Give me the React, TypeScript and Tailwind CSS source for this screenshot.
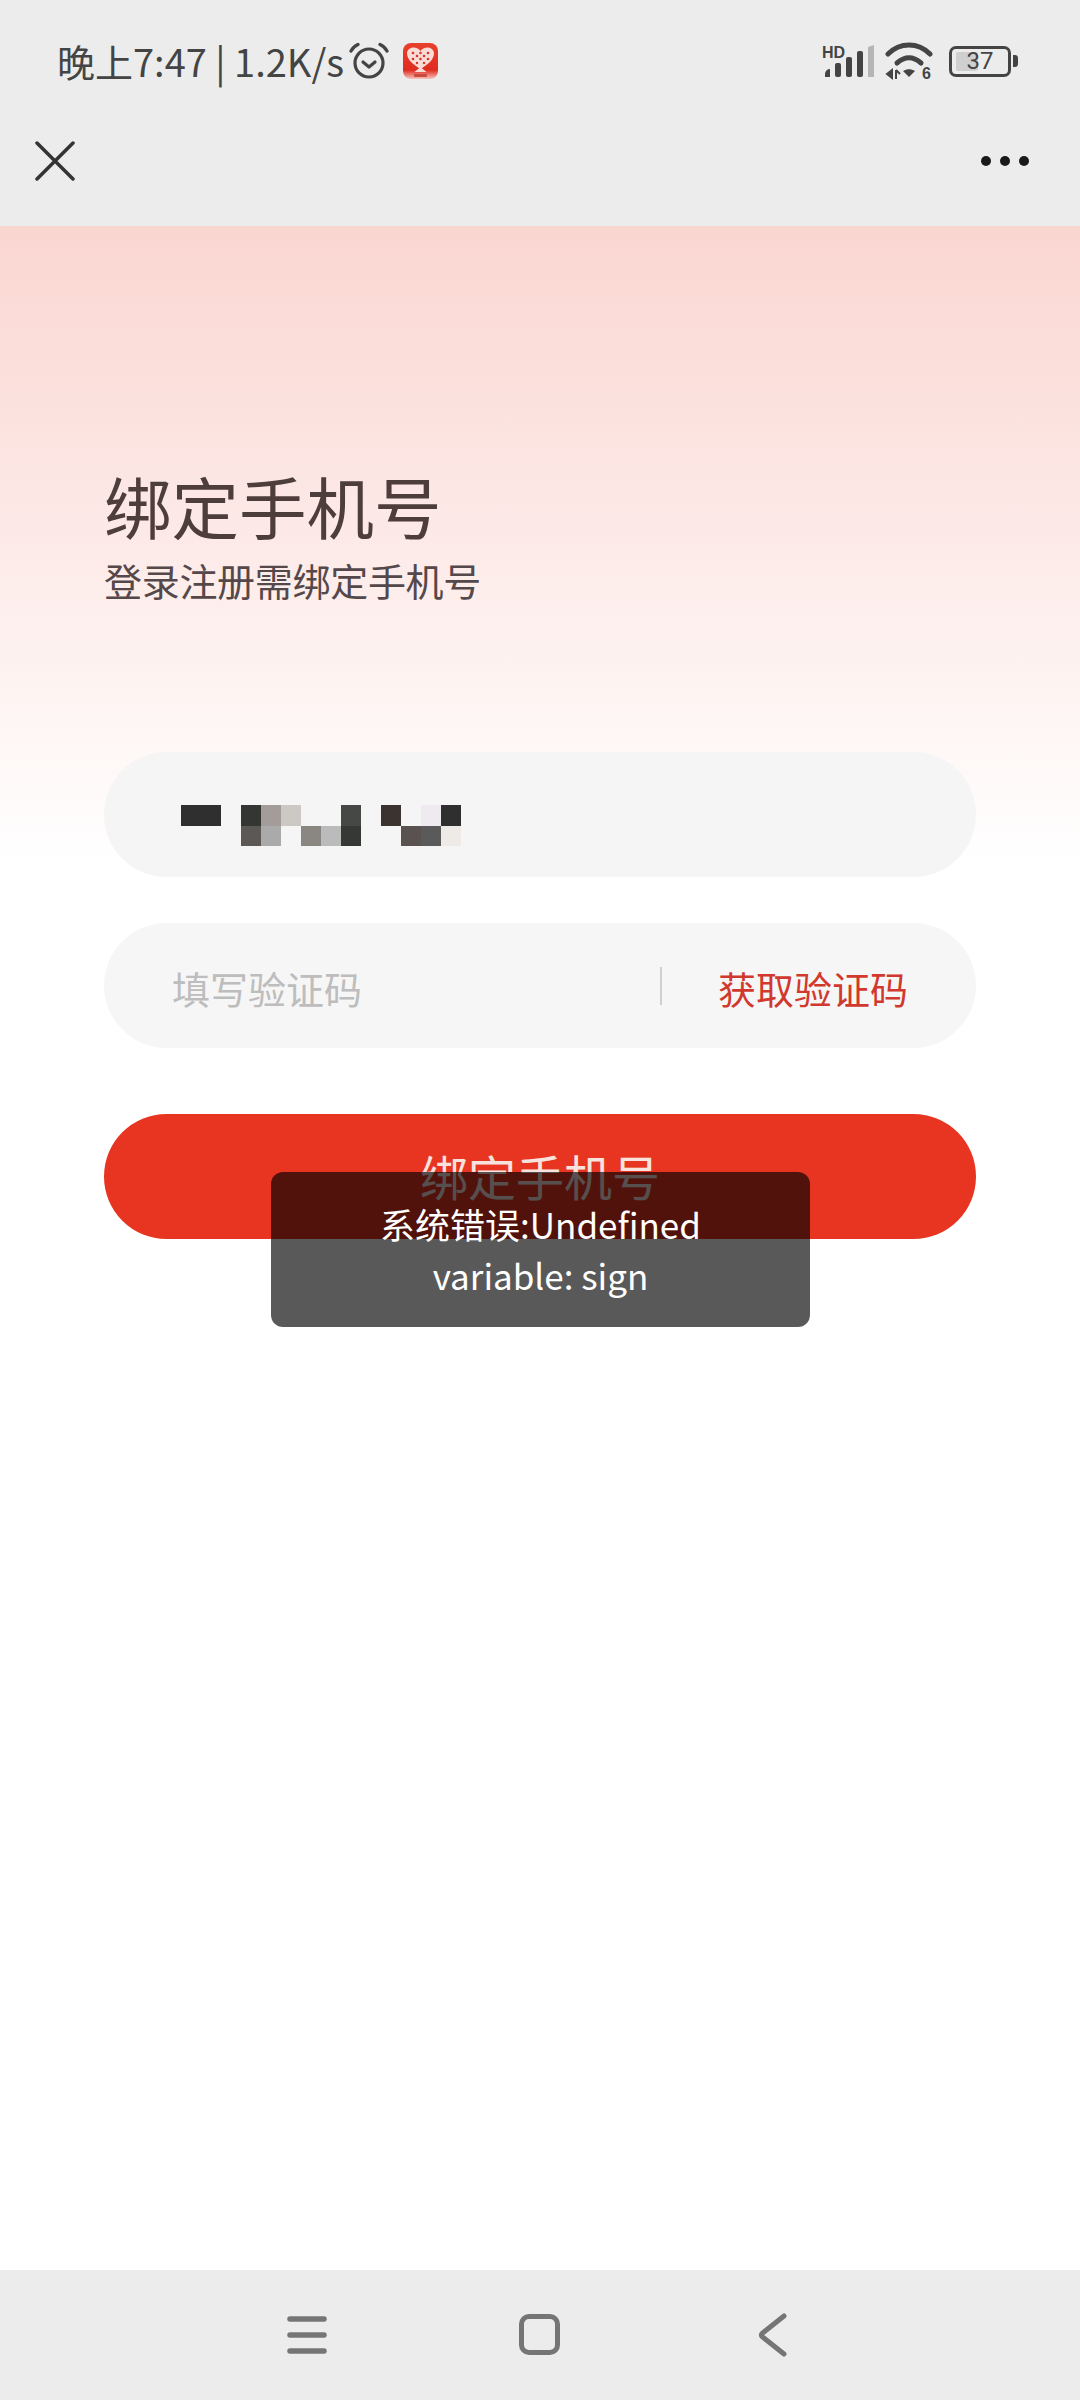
const cjk = "font-['Noto_Sans_CJK_SC','Noto_Sans',sans-serif]";

function AlarmIcon() {
  return (
    <svg width="40" height="38" viewBox="0 0 40 38" fill="none" stroke="#444" strokeWidth="3.2" strokeLinecap="round" strokeLinejoin="round">
      <circle cx="20" cy="21" r="14" />
      <path d="M14 20l6 5 6-5" />
      <path d="M2 9c1.500-3 3.500-5 7-6.500" />
      <path d="M38 9c-1.500-3-3.500-5-7-6.500" />
    </svg>
  );
}

function AppIcon() {
  return (
    <svg width="35" height="36" viewBox="0 0 35 36">
      <defs>
        <linearGradient id="appRed" x1="0" y1="0" x2="0" y2="1">
          <stop offset="0" stopColor="#e8402c" />
          <stop offset="0.75" stopColor="#e02c20" />
          <stop offset="1" stopColor="#f6c5bd" />
        </linearGradient>
      </defs>
      <rect width="35" height="36" rx="8" fill="url(#appRed)" />
      <path d="M17.500 26C11 22 4 17 4 10.500 4 7 7 4.500 10.500 4.500c3 0 5.500 1.500 7 3.500 1.500-2 4-3.500 7-3.500C28 4.500 31 7 31 10.500 31 17 24 22 17.500 26z" fill="#f9dcd6" />
      <g fill="#d9362a">
        <circle cx="10" cy="10" r="1.300" />
        <circle cx="14" cy="13" r="1.300" />
        <circle cx="17.500" cy="10" r="1.300" />
        <circle cx="21" cy="13" r="1.300" />
        <circle cx="25" cy="10" r="1.300" />
        <circle cx="10" cy="16" r="1.300" />
        <circle cx="17.500" cy="16" r="1.300" />
        <circle cx="25" cy="16" r="1.300" />
        <circle cx="14" cy="20" r="1.200" />
        <circle cx="21" cy="20" r="1.200" />
      </g>
      <path d="M17.500 24l-6 5h12z" fill="#f9dcd6" />
      <rect x="11" y="31" width="13" height="3" rx="1" fill="#c8493d" />
    </svg>
  );
}

function SignalIcon() {
  return (
    <svg width="52" height="36" viewBox="0 0 52 36">
      <text x="0" y="15" fontFamily="'Liberation Sans', sans-serif" fontWeight="700" fontSize="16" fill="#444">HD</text>
      <g fill="#444">
        <path d="M3 34v-3a5 5 0 0 1 5-5v8z" />
        <rect x="13" y="20" width="6" height="14" rx="2" />
        <rect x="24" y="14" width="6" height="20" rx="2" />
        <rect x="35" y="8" width="6" height="26" rx="2" />
      </g>
      <path d="M46 4l6-2v32h-6z" fill="#b5b5b5" />
    </svg>
  );
}

function WifiIcon() {
  return (
    <svg width="50" height="40" viewBox="0 0 50 40" fill="none">
      <path d="M3 13C15 1 33 1 45 13" stroke="#444" strokeWidth="5" strokeLinecap="round" />
      <path d="M12 22c8-7 16-7 24 0" stroke="#444" strokeWidth="5" strokeLinecap="round" />
      <path d="M18 30c4-2.500 8-2.500 12 0l-6 6z" fill="#444" />
      <path d="M7 29v8l-5-4zM11 29v9M11 29l4 4" stroke="#444" strokeWidth="2" fill="#444" />
      <text x="37" y="38" fontFamily="'Liberation Sans', sans-serif" fontWeight="700" fontSize="16" fill="#444">6</text>
    </svg>
  );
}

function BatteryIcon() {
  return (
    <div className="flex items-center gap-[2px]">
      <div className="relative flex h-[31px] w-[62px] items-center rounded-[7px] border-[3px] border-[#444] pl-[4px]">
        <div className="h-[19px] w-[22px] rounded-[2px] bg-[#cfcfcf]" />
        <span className="absolute inset-0 flex items-center justify-center font-['Roboto',sans-serif] text-[24px] leading-none text-[#444]">37</span>
      </div>
      <div className="h-[12px] w-[5px] rounded-r-[3px] bg-[#444]" />
    </div>
  );
}

function MaskedNumber() {
  return (
    <div className="grid grid-cols-[repeat(14,20px)] grid-rows-[21px_20px]">
      <div className="bg-[#2f2f2f]" />
      <div className="bg-[#2f2f2f]" />
      <div />
      <div className="bg-[#333633]" />
      <div className="bg-[#a39c9a]" />
      <div className="bg-[#ccc9c4]" />
      <div />
      <div />
      <div className="bg-[#454845]" />
      <div />
      <div className="bg-[#3a3330]" />
      <div />
      <div className="bg-[#eeeaf0]" />
      <div className="bg-[#2f2f2f]" />

      <div />
      <div />
      <div />
      <div className="bg-[#5c5855]" />
      <div className="bg-[#aaaaaa]" />
      <div />
      <div className="bg-[#8a8682]" />
      <div className="bg-[#bbbbbb]" />
      <div className="bg-[#353835]" />
      <div />
      <div />
      <div className="bg-[#5a5250]" />
      <div className="bg-[#5a5a5a]" />
      <div className="bg-[#eeeae5]" />
    </div>
  );
}

export default function App() {
  return (
    <div className={`relative flex h-[2400px] w-[1080px] flex-col overflow-hidden bg-white ${cjk}`}>
      <header className="h-[226px] shrink-0 bg-[#ececec]">
        <div className="flex h-[128px] items-center justify-between pl-[57px] pr-[62px] pb-[6px]">
          <div className="flex items-center">
            <span className="text-[38px] leading-none whitespace-nowrap text-[#444]">晚上7:47 | 1.2K/s</span>
            <div className="ml-[5px]"><AlarmIcon /></div>
            <div className="ml-[14px]"><AppIcon /></div>
          </div>
          <div className="flex items-center">
            <SignalIcon />
            <div className="ml-[11px]"><WifiIcon /></div>
            <div className="ml-[14px]"><BatteryIcon /></div>
          </div>
        </div>
        <div className="flex items-center justify-between pl-[35px] pr-[51px] pt-[13px]">
          <svg width="40" height="40" viewBox="0 0 40 40" fill="none" stroke="#333" strokeWidth="3.500" strokeLinecap="round">
            <path d="M2 2l36 36M38 2L2 38" />
          </svg>
          <div className="flex items-center gap-[9px]">
            <div className="h-[10px] w-[10px] rounded-full bg-[#1a1a1a]" />
            <div className="h-[10px] w-[10px] rounded-full bg-[#1a1a1a]" />
            <div className="h-[10px] w-[10px] rounded-full bg-[#1a1a1a]" />
          </div>
        </div>
      </header>

      <main className="flex-1 bg-[linear-gradient(180deg,#fad6d1_0px,#ffffff_640px)] px-[104px] pt-[234px]">
        <h1 className="text-[67.5px] leading-[90px] font-normal text-[#4d3d3b]">绑定手机号</h1>
        <p className="mt-[5px] text-[38px] leading-[50px] tracking-[-0.3px] text-[#55484a]">登录注册需绑定手机号</p>

        <div className="mt-[147px] flex h-[125px] items-center rounded-full bg-[#f5f4f4]/90 pl-[77px] pt-[21px]">
          <MaskedNumber />
        </div>

        <div className="mt-[46px] flex h-[125px] items-center rounded-full bg-[#f6f6f6] pl-[68px] pr-[68px]">
          <span className="mt-[4px] flex-1 text-[38px] leading-none text-[#bdbdbd]">填写验证码</span>
          <div className="h-[38px] w-[2px] bg-[#cfcfcf]" />
          <span className="mt-[4px] ml-[56px] text-[38px] leading-none text-[#d2392e]">获取验证码</span>
        </div>

        <button className="mt-[66px] flex h-[125px] w-full items-center justify-center rounded-full bg-[#e83522] text-[48px] leading-none text-[#f7e2dd]">
          <span className="-mt-[3px]">绑定手机号</span>
        </button>
      </main>

      <nav className="flex h-[130px] shrink-0 items-center bg-[#ececec] pb-[1px] pl-[287px]">
        <svg width="40" height="40" viewBox="0 0 40 40" fill="none" stroke="#757575" strokeWidth="5.500" strokeLinecap="round">
          <path d="M3 4h34M3 20h34M3 36h34" />
        </svg>
        <div className="ml-[192px] h-[41px] w-[41px] rounded-[10px] border-[5px] border-[#757575]" />
        <svg className="ml-[198px]" width="30" height="44" viewBox="0 0 30 44" fill="none" stroke="#757575" strokeWidth="5" strokeLinecap="round" strokeLinejoin="round">
          <path d="M26 3L4 20.500a2 2 0 0 0 0 3L26 41" />
        </svg>
      </nav>

      <div className="absolute left-[271px] top-[1172px] flex h-[155px] w-[539px] items-center justify-center rounded-[12px] bg-black/65 px-[50px] pb-[1px] text-center text-[35px] leading-[51px] text-white">
        <span>系统错误:Undefined<br />variable: sign</span>
      </div>
    </div>
  );
}
